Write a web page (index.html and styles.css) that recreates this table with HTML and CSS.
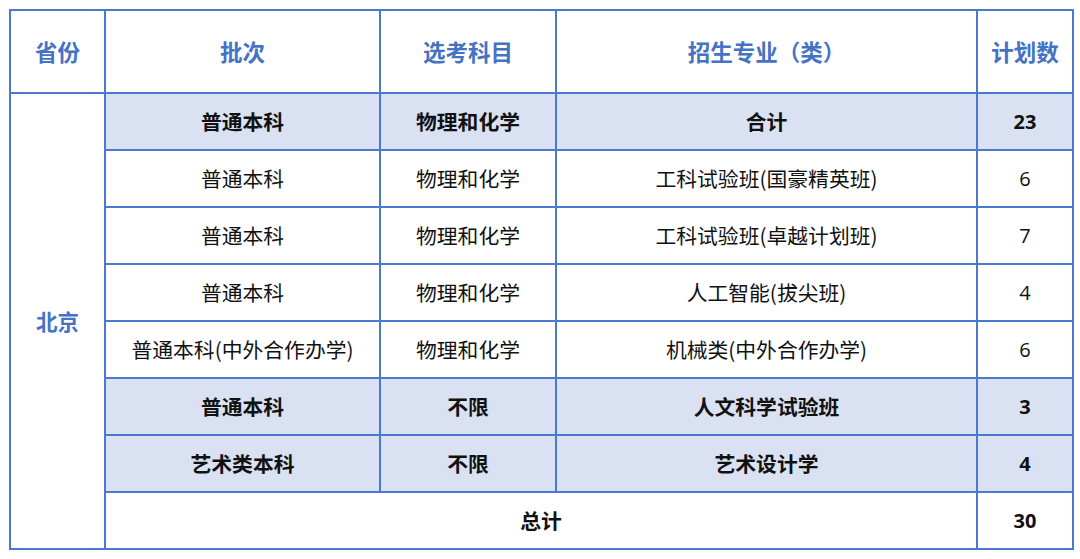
FILE: index.html
```html
<!DOCTYPE html>
<html lang="zh-CN">
<head>
<meta charset="utf-8">
<title>招生计划</title>
<link rel="stylesheet" href="styles.css">
</head>
<body>
<table class="plan">
  <colgroup>
    <col class="c-prov">
    <col class="c-batch">
    <col class="c-subj">
    <col class="c-major">
    <col class="c-num">
  </colgroup>
  <thead>
    <tr class="head">
      <th>省份</th>
      <th>批次</th>
      <th>选考科目</th>
      <th>招生专业（类）</th>
      <th>计划数</th>
    </tr>
  </thead>
  <tbody>
    <tr class="row hl">
      <td class="prov" rowspan="8">北京</td>
      <td>普通本科</td>
      <td>物理和化学</td>
      <td>合计</td>
      <td class="num">23</td>
    </tr>
    <tr class="row">
      <td>普通本科</td>
      <td>物理和化学</td>
      <td>工科试验班(国豪精英班)</td>
      <td class="num">6</td>
    </tr>
    <tr class="row">
      <td>普通本科</td>
      <td>物理和化学</td>
      <td>工科试验班(卓越计划班)</td>
      <td class="num">7</td>
    </tr>
    <tr class="row">
      <td>普通本科</td>
      <td>物理和化学</td>
      <td>人工智能(拔尖班)</td>
      <td class="num">4</td>
    </tr>
    <tr class="row">
      <td>普通本科(中外合作办学)</td>
      <td>物理和化学</td>
      <td>机械类(中外合作办学)</td>
      <td class="num">6</td>
    </tr>
    <tr class="row hl">
      <td>普通本科</td>
      <td>不限</td>
      <td>人文科学试验班</td>
      <td class="num">3</td>
    </tr>
    <tr class="row hl">
      <td>艺术类本科</td>
      <td>不限</td>
      <td>艺术设计学</td>
      <td class="num">4</td>
    </tr>
    <tr class="row total">
      <td colspan="3">总计</td>
      <td class="num">30</td>
    </tr>
  </tbody>
</table>
</body>
</html>
```
FILE: styles.css
```css
html, body {
  margin: 0;
  padding: 0;
  background: #ffffff;
}
body {
  padding: 9px 0 0 9px;
  font-family: "Noto Sans CJK SC", "Noto Sans", sans-serif;
  color: #111111;
}
.plan {
  border-collapse: collapse;
  table-layout: fixed;
  width: 1063px;
}
.c-prov { width: 95px; }
.c-batch { width: 275px; }
.c-subj { width: 176px; }
.c-major { width: 421px; }
.c-num { width: 96px; }
.plan th,
.plan td {
  border: 2px solid #4a78d2;
  text-align: center;
  vertical-align: middle;
  padding: 0;
  line-height: 1;
}
.plan th {
  height: 81px;
  color: #4472c4;
  font-size: 22.5px;
  font-weight: 700;
}
.plan td {
  height: 55px;
  font-size: 20.8px;
  font-weight: 400;
}
.plan td.prov {
  color: #4472c4;
  font-size: 21.5px;
  font-weight: 700;
  background: #ffffff;
}
.plan td.num {
  font-family: "Open Sans", "Noto Sans", sans-serif;
  font-size: 20px;
}
.row.hl td {
  background: #d9e1f2;
  font-weight: 700;
}
.row.hl td.prov {
  background: #ffffff;
}
.row.total td {
  font-weight: 700;
}
```
